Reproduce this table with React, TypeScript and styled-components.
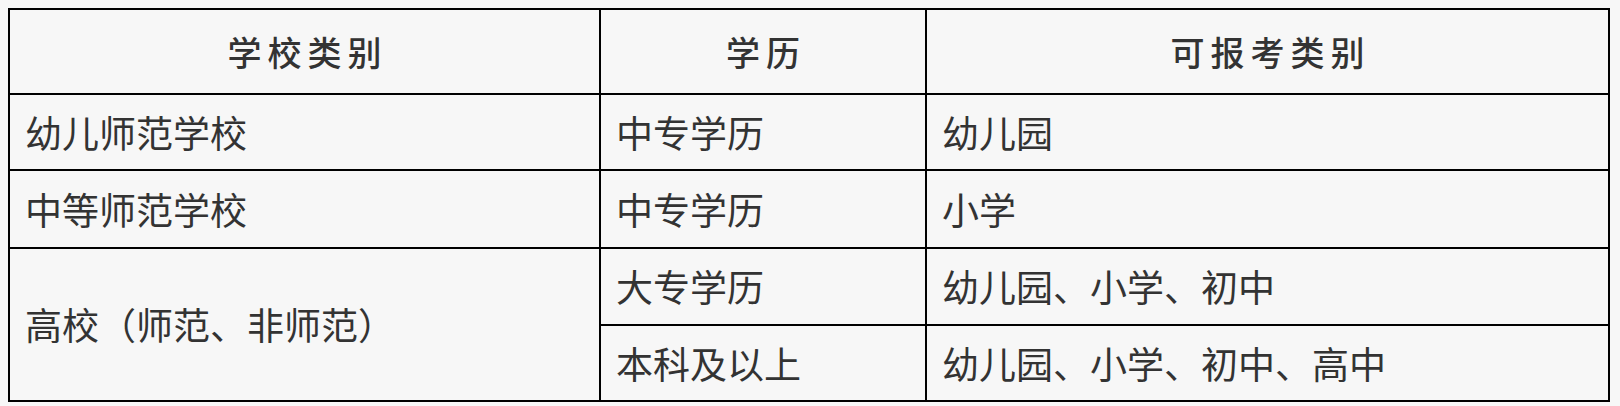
import React from "react";
import styled, { createGlobalStyle } from "styled-components";

const Global = createGlobalStyle`
  html, body {
    margin: 0;
    padding: 0;
    background: #f7f7f7;
  }
  body {
    padding: 8px;
    font-family: "Noto Sans CJK SC", "Noto Sans", sans-serif;
  }
`;

const Table = styled.table`
  width: 1600px;
  border-collapse: collapse;
  table-layout: fixed;
  background: #f7f7f7;
  color: #333;
`;

const HeadCell = styled.th`
  border: 2px solid #000;
  height: 83px;
  padding: 0;
  font-size: 34px;
  font-weight: 500;
  letter-spacing: 6px;
  text-align: center;
  vertical-align: middle;
  color: #333;
  line-height: 1;
  padding-left: 6px;
`;

const Cell = styled.td<{ $h?: number }>`
  border: 2px solid #000;
  height: ${(p) => p.$h ?? 74}px;
  padding: 0 0 0 15px;
  font-size: 37px;
  font-weight: 400;
  line-height: 1;
  text-align: left;
  vertical-align: middle;
  color: #333;
  white-space: nowrap;
`;

const rows = [
  { school: "幼儿师范学校", edu: "中专学历", cat: "幼儿园", h: 74 },
  { school: "中等师范学校", edu: "中专学历", cat: "小学", h: 76 },
];

export default function App() {
  return (
    <>
      <Global />
      <Table>
        <colgroup>
          <col style={{ width: 591 }} />
          <col style={{ width: 326 }} />
          <col style={{ width: 683 }} />
        </colgroup>
        <thead>
          <tr>
            <HeadCell>学校类别</HeadCell>
            <HeadCell>学历</HeadCell>
            <HeadCell>可报考类别</HeadCell>
          </tr>
        </thead>
        <tbody>
          {rows.map((r) => (
            <tr key={r.school}>
              <Cell $h={r.h}>{r.school}</Cell>
              <Cell $h={r.h}>{r.edu}</Cell>
              <Cell $h={r.h}>{r.cat}</Cell>
            </tr>
          ))}
          <tr>
            <Cell rowSpan={2}>高校（师范、非师范）</Cell>
            <Cell $h={75}>大专学历</Cell>
            <Cell $h={75}>幼儿园、小学、初中</Cell>
          </tr>
          <tr>
            <Cell $h={74}>本科及以上</Cell>
            <Cell $h={74}>幼儿园、小学、初中、高中</Cell>
          </tr>
        </tbody>
      </Table>
    </>
  );
}
